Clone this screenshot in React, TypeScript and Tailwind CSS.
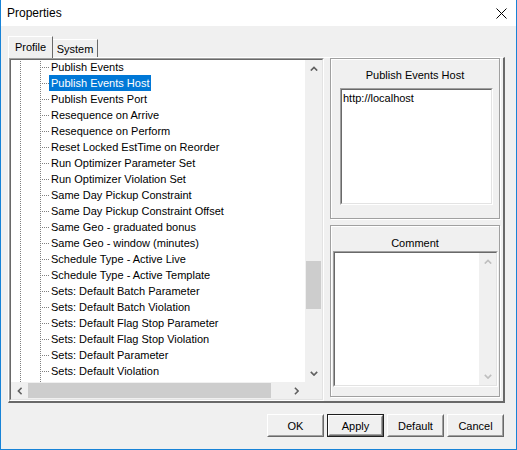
import React from "react";

const items: string[] = [
  "Publish Events",
  "Publish Events Host",
  "Publish Events Port",
  "Resequence on Arrive",
  "Resequence on Perform",
  "Reset Locked EstTime on Reorder",
  "Run Optimizer Parameter Set",
  "Run Optimizer Violation Set",
  "Same Day Pickup Constraint",
  "Same Day Pickup Constraint Offset",
  "Same Geo - graduated bonus",
  "Same Geo - window (minutes)",
  "Schedule Type - Active Live",
  "Schedule Type - Active Template",
  "Sets: Default Batch Parameter",
  "Sets: Default Batch Violation",
  "Sets: Default Flag Stop Parameter",
  "Sets: Default Flag Stop Violation",
  "Sets: Default Parameter",
  "Sets: Default Violation",
  "",
];

const SELECTED = 1;

type Dir = "up" | "down" | "left" | "right";

function Arrow({ dir, color }: { dir: Dir; color: string }) {
  const vertical = dir === "up" || dir === "down";
  const d =
    dir === "up"
      ? "M0.8 4.6 L4 1.4 L7.2 4.6"
      : dir === "down"
      ? "M0.8 0.9 L4 4.1 L7.2 0.9"
      : dir === "left"
      ? "M4.6 0.8 L1.4 4 L4.6 7.2"
      : "M0.9 0.8 L4.1 4 L0.9 7.2";
  return (
    <svg
      width={vertical ? 8 : 5.5}
      height={vertical ? 5.5 : 8}
      viewBox={vertical ? "0 0 8 5.5" : "0 0 5.5 8"}
      className="block"
    >
      <path d={d} fill="none" stroke={color} strokeWidth={1.6} />
    </svg>
  );
}

// dotted tree guide lines, one pixel on / one pixel off
const vDots =
  "w-px bg-[repeating-linear-gradient(to_bottom,#808080_0px,#808080_1px,transparent_1px,transparent_2px)]";

function HConnector() {
  return (
    <svg width="8" height="16" viewBox="0 0 8 16" className="block shrink-0">
      {[1, 3, 5, 7].map((x) => (
        <rect key={x} x={x} y={8} width={1} height={1} fill="#808080" />
      ))}
    </svg>
  );
}

function TreeRow({ label, selected }: { label: string; selected: boolean }) {
  return (
    <div className="flex h-4 items-stretch">
      <div className="w-[9px]" />
      <div className={vDots} />
      <div className="w-[19px]" />
      <div className={vDots} />
      {label !== "" && (
        <>
          <HConnector />
          <span
            className={
              "flex items-center whitespace-nowrap px-[2px] " +
              (selected ? "bg-[#0078d7] text-white" : "text-black")
            }
          >
            {label}
          </span>
        </>
      )}
    </div>
  );
}

function Sunken({ className, children }: { className: string; children: React.ReactNode }) {
  return (
    <div
      className={
        "flex border border-t-[#a0a0a0] border-l-[#a0a0a0] border-r-white border-b-white " +
        className
      }
    >
      <div className="flex flex-1 border border-t-[#696969] border-l-[#696969] border-r-[#e3e3e3] border-b-[#e3e3e3] overflow-hidden">
        {children}
      </div>
    </div>
  );
}

function Button({ label, isDefault }: { label: string; isDefault?: boolean }) {
  return (
    <div
      className={
        "flex h-[23px] w-[57px] " + (isDefault ? "border border-[#1e1e1e]" : "")
      }
    >
      <div className="flex flex-1 border border-t-white border-l-white border-r-[#696969] border-b-[#696969]">
        <div className="flex flex-1 items-center justify-center border border-t-[#f0f0f0] border-l-[#f0f0f0] border-r-[#a0a0a0] border-b-[#a0a0a0] bg-[#f0f0f0] text-black">
          {label}
        </div>
      </div>
    </div>
  );
}

export default function App() {
  return (
    <div className="flex h-[450px] w-[517px] flex-col border-x border-b border-[#1883d7] bg-[#f0f0f0] font-['Liberation_Sans',Arial,sans-serif] text-[11px] leading-[16px] text-black select-none">
      {/* title bar */}
      <div className="flex h-[26px] items-center justify-between bg-white pl-[6px] pr-[9px]">
        <span className="text-[12px] text-black">Properties</span>
        <svg width="11" height="11" viewBox="0 0 11 11" className="block">
          <path d="M0.5 0.5 L10.5 10.5 M10.5 0.5 L0.5 10.5" stroke="#000" strokeWidth={1} />
        </svg>
      </div>

      <div className="flex flex-1 flex-col pl-[7px] pr-[11px] pt-[10px]">
        {/* tabs */}
        <div className="relative z-10 flex h-[21px] items-end">
          <div className="-mb-px flex h-[22px] w-[45px] items-start justify-center border-l border-t border-r border-t-white border-l-white border-r-[#696969] bg-[#f0f0f0] pt-[2px]">
            Profile
          </div>
          <div className="flex h-[18px] w-[45px] items-start justify-center border-t border-r border-t-white border-r-[#696969] pt-[1px]">
            System
          </div>
        </div>

        {/* tab page */}
        <div className="flex h-[346px] border-l border-t border-r-2 border-b-2 border-l-white border-t-white border-r-[#696969] border-b-[#696969]">
          <Sunken className="h-[343px] w-[315px] shrink-0">
            <div className="flex flex-1 flex-col">
              <div className="flex h-[322px]">
                {/* tree list */}
                <div className="flex-1 overflow-hidden bg-white">
                  <div className="-mt-px">
                    {items.map((it, i) => (
                      <TreeRow key={i} label={it} selected={i === SELECTED} />
                    ))}
                  </div>
                </div>
                {/* vertical scrollbar */}
                <div className="flex w-[17px] flex-col bg-[#f0f0f0]">
                  <div className="flex h-[17px] items-center justify-center">
                    <Arrow dir="up" color="#606060" />
                  </div>
                  <div className="flex flex-1 flex-col">
                    <div className="h-[184px]" />
                    <div className="mx-px h-[48px] bg-[#cdcdcd]" />
                  </div>
                  <div className="flex h-[17px] items-center justify-center">
                    <Arrow dir="down" color="#606060" />
                  </div>
                </div>
              </div>
              {/* horizontal scrollbar */}
              <div className="flex h-[17px]">
                <div className="flex w-[294px] bg-[#f0f0f0]">
                  <div className="flex w-[17px] items-center justify-center">
                    <Arrow dir="left" color="#606060" />
                  </div>
                  <div className="my-px w-[243px] bg-[#cdcdcd]" />
                  <div className="flex-1" />
                  <div className="flex w-[17px] items-center justify-center">
                    <Arrow dir="right" color="#606060" />
                  </div>
                </div>
                <div className="flex-1 bg-[#f0f0f0]" />
              </div>
            </div>
          </Sunken>

          {/* right column */}
          <div className="flex flex-1 flex-col pl-[6px]">
            <div className="flex h-[161px] w-[170px] flex-col border border-[#a0a0a0] shadow-[inset_1px_1px_0_#ffffff,1px_1px_0_#ffffff]">
              <div className="pt-[8px] text-center">Publish Events Host</div>
              <Sunken className="ml-[9px] mt-[5px] h-[117px] w-[153px] bg-white">
                <div className="flex-1 bg-white pl-px">http://localhost</div>
              </Sunken>
            </div>

            <div className="mt-[6px] flex h-[172px] w-[170px] flex-col border border-[#a0a0a0] shadow-[inset_1px_1px_0_#ffffff,1px_1px_0_#ffffff]">
              <div className="pt-[9px] text-center">Comment</div>
              <Sunken className="ml-[2px] h-[136px] w-[165px]">
                <div className="flex flex-1">
                  <div className="flex-1 bg-white" />
                  <div className="flex w-[17px] flex-col justify-between bg-[#f0f0f0]">
                    <div className="flex h-[17px] items-center justify-center">
                      <Arrow dir="up" color="#bfbfbf" />
                    </div>
                    <div className="flex h-[17px] items-center justify-center">
                      <Arrow dir="down" color="#bfbfbf" />
                    </div>
                  </div>
                </div>
              </Sunken>
            </div>
          </div>
        </div>

        {/* dialog buttons */}
        <div className="mr-px mt-[11px] flex justify-end gap-[3px]">
          <Button label="OK" />
          <Button label="Apply" isDefault />
          <Button label="Default" />
          <Button label="Cancel" />
        </div>
      </div>
    </div>
  );
}
